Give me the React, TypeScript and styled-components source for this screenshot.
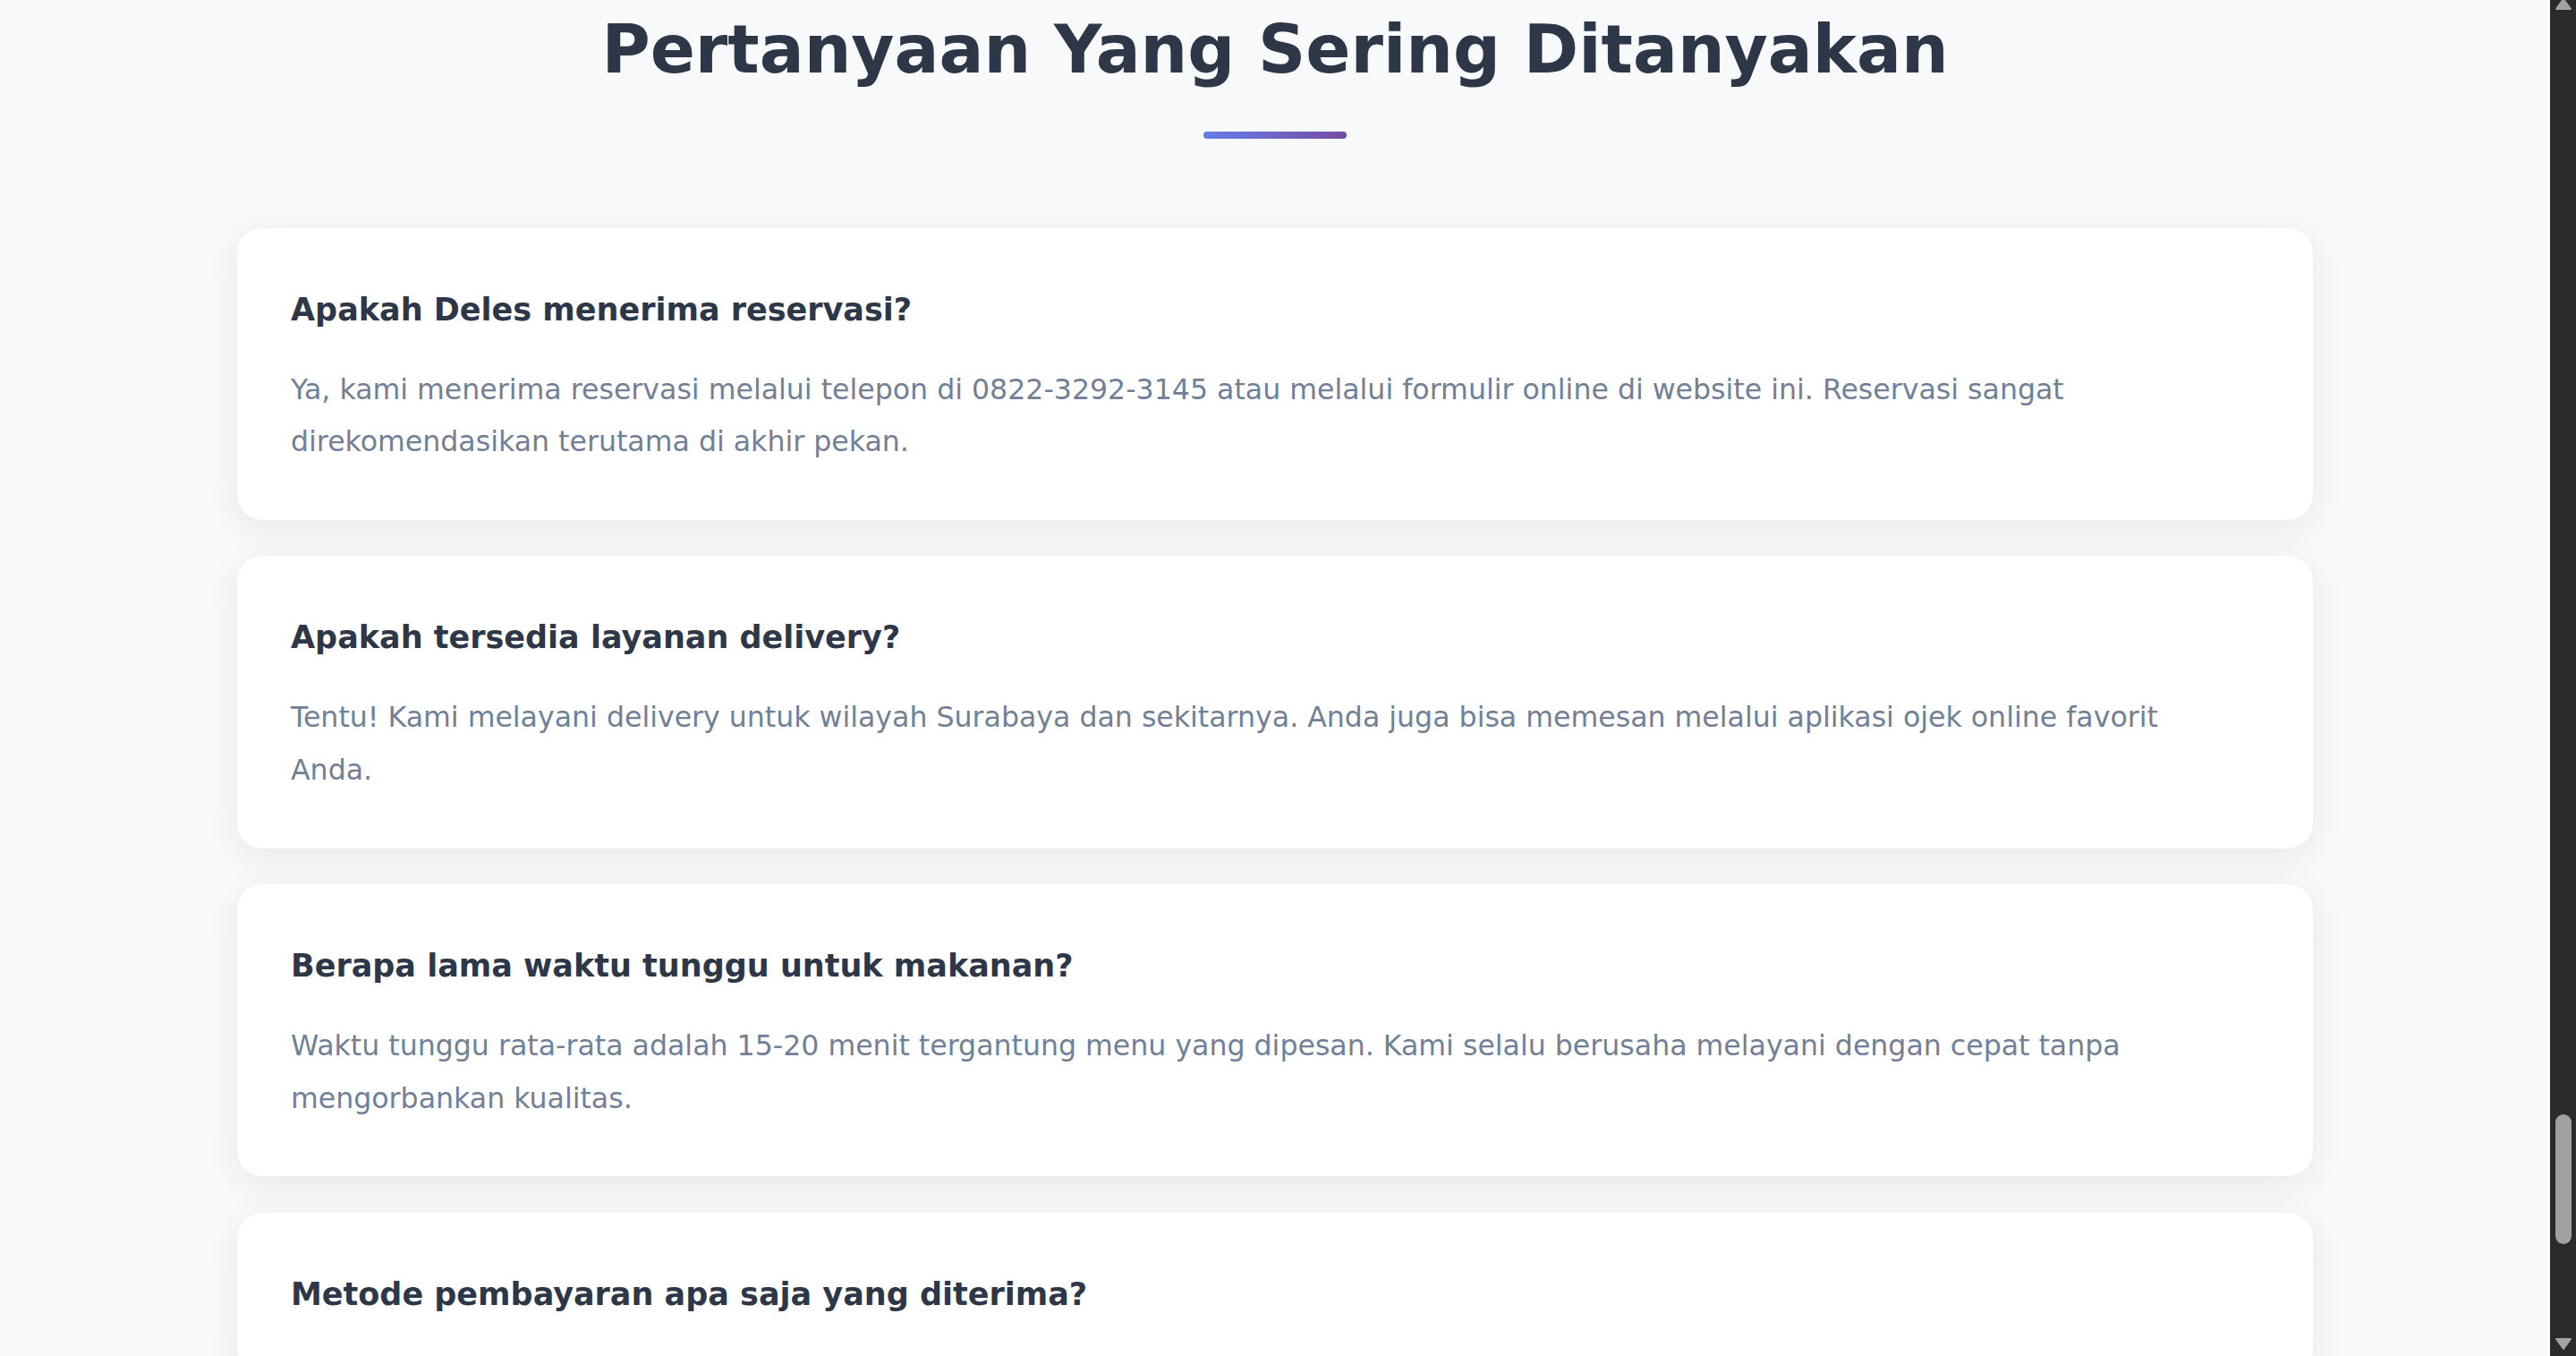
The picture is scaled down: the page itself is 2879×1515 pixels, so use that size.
import React from "react";
import styled, { createGlobalStyle } from "styled-components";

const Global = createGlobalStyle`
  html, body {
    margin: 0;
    padding: 0;
    overflow: hidden;
    background: #f8f9fa;
  }
  * { box-sizing: border-box; }
`;

const Viewport = styled.div`
  display: flex;
  width: 100%;
  height: 1515px;
  overflow: hidden;
  font-family: "DejaVu Sans", "Open Sans", sans-serif;
`;

const Main = styled.main`
  flex: 1;
  min-width: 0;
  background: #f8f9fa;
  padding-top: 11px;
`;

const Title = styled.h1`
  margin: 0;
  text-align: center;
  font-size: 74px;
  line-height: 1.2;
  font-weight: 700;
  color: #2d3748;
`;

const Underline = styled.div`
  width: 160px;
  height: 8px;
  margin: 47px auto 0;
  border-radius: 4px;
  background: linear-gradient(90deg, #667eea 0%, #764ba2 100%);
`;

const List = styled.div`
  width: 2320px;
  margin: 100px auto 0;
  display: flex;
  flex-direction: column;
  gap: 40.5px;
`;

const Card = styled.article`
  background: #ffffff;
  border-radius: 28px;
  padding: 60px 60px 58px;
  box-shadow: 0 9px 40px rgba(0, 0, 0, 0.075);
`;

const Question = styled.h3`
  margin: 0;
  font-size: 35px;
  line-height: 1.8;
  font-weight: 700;
  color: #2d3748;
`;

const Answer = styled.p`
  margin: 28px 0 0;
  max-width: 2150px;
  font-size: 31.6px;
  line-height: 58.6px;
  font-weight: 400;
  color: #718096;
`;

const ScrollTrack = styled.div`
  width: 29px;
  flex: none;
  background: #2b2b2b;
  display: flex;
  flex-direction: column;
  align-items: flex-start;
  padding-left: 6px;
`;

const Arrow = styled.svg<{ $top?: boolean }>`
  display: block;
  width: 18px;
  height: 13px;
  margin-top: ${(p) => (p.$top ? "-2px" : "0")};
  margin-bottom: ${(p) => (p.$top ? "0" : "7px")};
`;

const Thumb = styled.div`
  width: 18px;
  height: 145px;
  margin-top: 1234px;
  border-radius: 9px;
  background: #a1a1a1;
`;

const Spacer = styled.div`
  flex: 1;
`;

type Faq = { q: string; a?: string };

const faqs: Faq[] = [
  {
    q: "Apakah Deles menerima reservasi?",
    a: "Ya, kami menerima reservasi melalui telepon di 0822-3292-3145 atau melalui formulir online di website ini. Reservasi sangat direkomendasikan terutama di akhir pekan.",
  },
  {
    q: "Apakah tersedia layanan delivery?",
    a: "Tentu! Kami melayani delivery untuk wilayah Surabaya dan sekitarnya. Anda juga bisa memesan melalui aplikasi ojek online favorit Anda.",
  },
  {
    q: "Berapa lama waktu tunggu untuk makanan?",
    a: "Waktu tunggu rata-rata adalah 15-20 menit tergantung menu yang dipesan. Kami selalu berusaha melayani dengan cepat tanpa mengorbankan kualitas.",
  },
  {
    q: "Metode pembayaran apa saja yang diterima?",
  },
];

export default function App() {
  return (
    <>
      <Global />
      <Viewport>
        <Main>
          <Title>Pertanyaan Yang Sering Ditanyakan</Title>
          <Underline />
          <List>
            {faqs.map((f) => (
              <Card key={f.q}>
                <Question>{f.q}</Question>
                {f.a && <Answer>{f.a}</Answer>}
              </Card>
            ))}
          </List>
        </Main>
        <ScrollTrack>
          <Arrow $top viewBox="0 0 18 13">
            <polygon points="9,1 17,12 1,12" fill="#a3a3a3" stroke="#a3a3a3" strokeLinejoin="round" strokeWidth="2" />
          </Arrow>
          <Thumb />
          <Spacer />
          <Arrow viewBox="0 0 18 13">
            <polygon points="1,1 17,1 9,12" fill="#a3a3a3" stroke="#a3a3a3" strokeLinejoin="round" strokeWidth="2" />
          </Arrow>
        </ScrollTrack>
      </Viewport>
    </>
  );
}
